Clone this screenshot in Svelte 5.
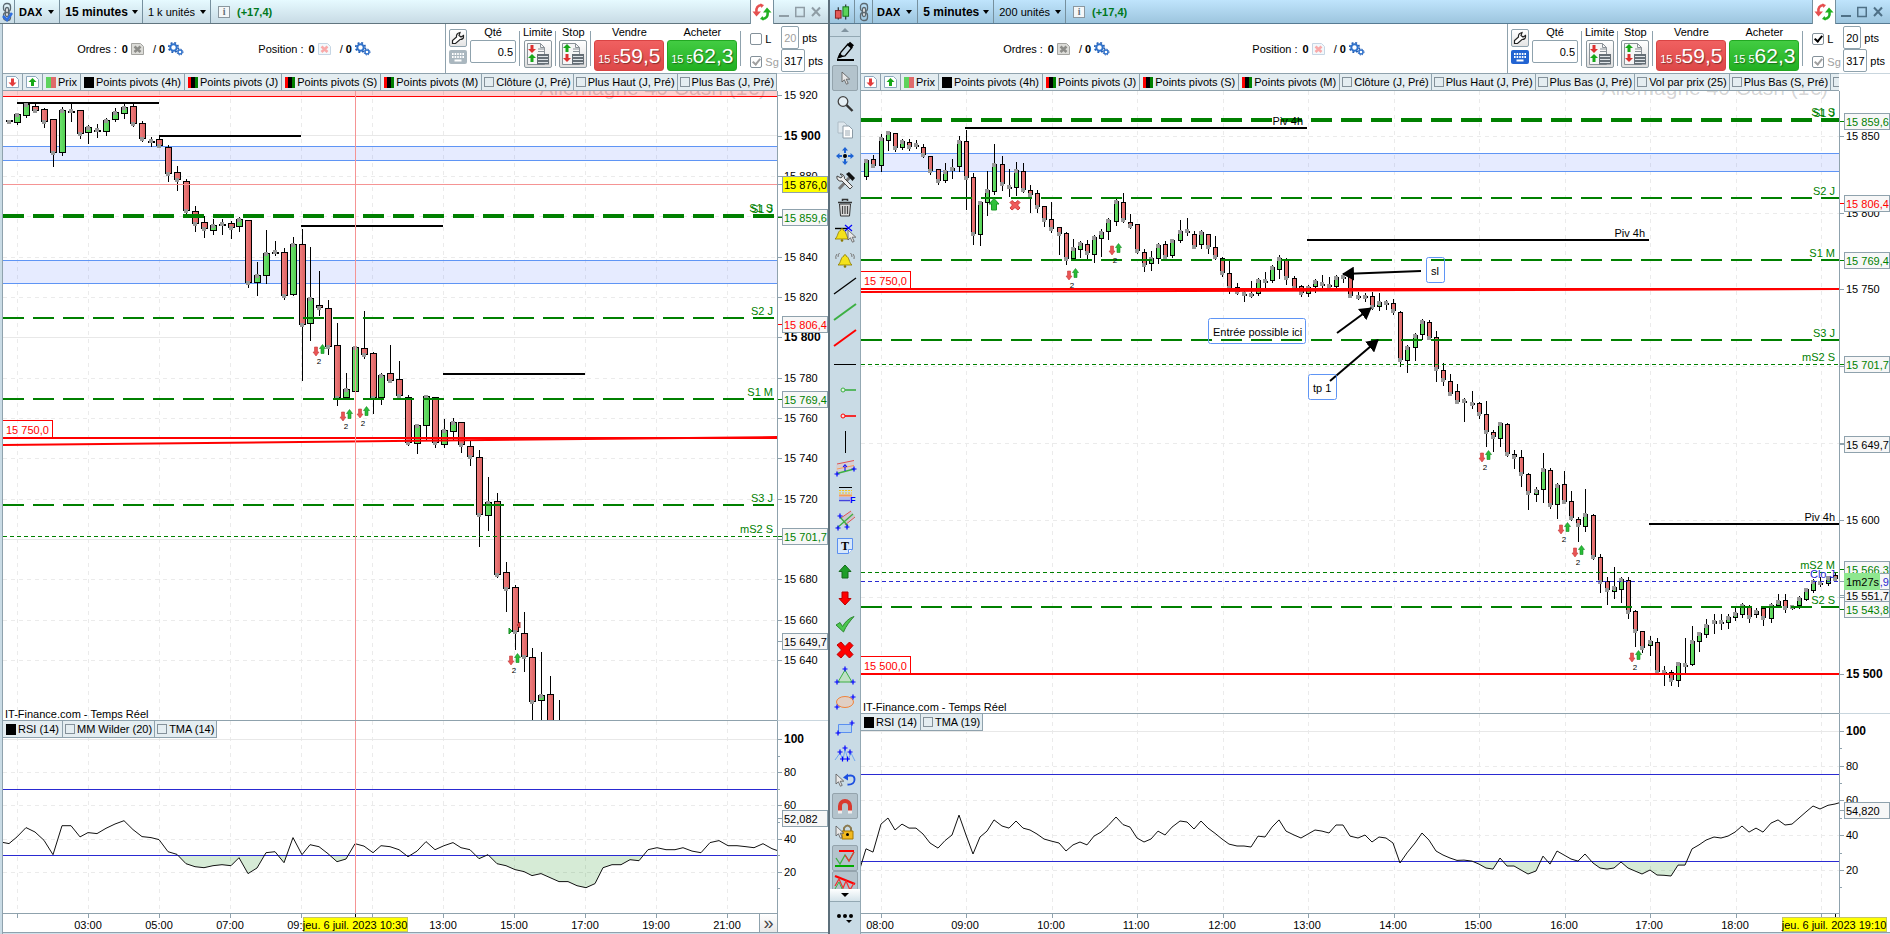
<script lang="ts">
  // [high, body top, body bottom, low, rising]
  type Candle = [number, number, number, number, number]

  interface Legend { label: string; kind: 'price' | 'black' | 'pivot' | 'off' }
  interface Level { y: number; style: 'thick' | 'long' | 'short' | 'close'; label?: string }
  interface Tag { y: number; text: string; kind: string }

  // ── Price data ─────────────────────────────────────────────────────────────
  const candles15: Candle[] = [
    [120,120,122,123,0],[113,114,123,124,1],[103,104,116,117,1],[103,106,111,111,0],[108,109,122,127,0],
    [119,119,153,166,0],[107,110,153,155,1],[103,111,111,121,0],[110,110,134,138,0],[125,127,133,143,1],
    [124,130,130,137,0],[118,120,132,135,1],[108,112,120,121,1],[104,107,114,118,1],[103,106,124,126,0],
    [121,123,139,141,0],[137,141,141,146,0],[136,139,146,147,0],[145,147,174,181,0],[166,172,180,190,0],
    [179,181,211,213,0],[206,211,224,231,0],[216,222,229,237,0],[219,225,231,234,1],[219,224,224,234,0],
    [221,223,228,238,0],[217,219,227,231,1],[220,220,283,287,0],[262,275,283,295,1],[230,253,276,283,1],
    [241,252,252,255,0],[248,252,296,299,0],[237,244,295,295,1],[229,244,325,380,0],[247,298,324,340,1],
    [271,305,308,315,0],[300,308,347,354,0],[323,345,398,405,0],[373,389,398,398,1],[347,347,392,402,1],
    [311,348,355,358,0],[352,353,398,413,0],[373,375,398,404,1],[345,373,381,382,0],[361,379,396,397,0],
    [395,397,443,445,0],[425,425,444,453,1],[395,396,426,440,1],[397,397,443,447,0],[419,430,445,447,1],
    [418,422,432,440,1],[422,422,445,452,0],[440,446,457,465,0],[450,457,515,546,0],[477,502,516,530,1],
    [493,501,575,577,0],[562,572,589,611,0],[585,587,632,649,0],[612,633,657,671,0],[648,657,702,722,0],
    [652,695,701,722,1],[676,694,726,730,0],[700,728,740,740,0],
  ]

  const candles5: Candle[] = [
    [160,160,177,179,1],[155,159,166,167,0],[134,138,166,171,1],[131,132,141,150,1],[133,133,148,151,0],
    [139,141,148,149,1],[139,142,147,150,0],[140,145,145,148,0],[144,147,155,157,0],[156,156,171,174,0],
    [169,169,181,184,0],[163,171,181,182,1],[159,168,171,178,1],[136,141,167,171,1],[130,141,178,209,0],
    [173,177,234,244,0],[201,202,235,245,1],[171,190,203,215,1],[144,164,192,194,1],[156,164,184,190,0],
    [169,187,187,196,0],[162,170,188,195,1],[163,171,190,192,0],[185,190,195,212,0],[190,193,207,212,0],
    [206,206,220,226,0],[202,219,229,232,0],[227,227,234,254,0],[232,233,259,264,0],[239,248,259,260,1],
    [241,243,250,257,1],[240,244,253,258,0],[235,237,255,262,1],[229,232,239,256,1],[218,220,232,239,1],
    [198,201,222,225,1],[193,202,220,222,0],[214,222,226,228,0],[224,224,251,253,0],[249,252,265,271,0],
    [251,258,264,270,1],[243,245,259,263,1],[241,244,257,259,0],[239,240,256,257,1],[220,231,241,242,1],
    [218,231,231,235,0],[231,234,247,248,0],[230,232,245,248,1],[234,234,247,253,0],[236,247,257,259,0],
    [257,258,273,276,0],[261,273,288,293,0],[283,287,292,294,0],[288,294,294,301,0],[281,294,295,297,0],
    [278,280,294,295,1],[272,281,281,290,0],[265,267,281,282,1],[255,258,270,278,1],[258,259,278,284,0],
    [276,278,288,290,0],[285,286,293,296,0],[285,287,294,296,1],[279,281,287,292,1],[275,284,284,287,0],
    [277,285,286,288,0],[275,277,287,289,1],[274,277,277,282,0],[275,276,296,297,0],[292,296,297,299,0],
    [293,296,297,301,0],[292,296,307,309,0],[293,302,307,310,1],[300,303,303,309,0],[299,303,311,314,0],
    [311,312,360,366,0],[345,347,361,372,1],[333,335,348,360,1],[319,321,335,339,1],[320,322,338,339,0],
    [331,337,369,381,0],[363,370,380,385,0],[374,381,394,395,0],[384,391,402,403,0],[398,401,401,421,0],
    [391,403,404,408,0],[402,403,414,418,0],[401,414,432,446,0],[430,432,437,451,0],[422,423,439,446,1],
    [423,424,454,456,0],[450,454,457,468,0],[450,457,474,486,0],[473,474,493,509,0],[487,490,495,501,1],
    [453,469,490,502,1],[468,470,505,508,0],[483,485,505,518,1],[471,484,502,503,0],[491,501,518,520,0],
    [517,519,525,541,0],[489,514,527,531,1],[514,515,557,559,0],[554,557,582,592,0],[577,581,590,604,0],
    [567,587,592,598,1],[577,579,590,602,1],[577,580,612,618,0],[610,611,631,646,0],[631,631,648,652,0],
    [636,641,646,655,1],[638,642,672,673,0],[666,672,672,685,0],[670,672,680,685,0],[662,663,681,686,1],
    [638,665,665,673,0],[626,641,665,665,1],[632,633,642,651,1],[619,625,635,637,1],[614,621,624,633,1],
    [614,622,622,629,0],[614,617,623,628,1],[608,613,618,620,1],[603,605,615,617,1],[605,606,617,622,0],
    [608,611,615,617,1],[607,608,618,625,0],[603,605,619,622,1],[594,601,606,607,1],[594,600,608,612,0],
    [605,607,607,609,0],[596,598,606,608,1],[588,589,600,600,1],[579,581,591,592,1],[577,583,583,586,0],
    [576,577,584,585,1],[573,575,579,580,0],
  ]

  // RSI series start one bar before the first visible candle
  const rsi15 = [
    38,37,41,46.6,44,39,30.3,47.8,47.8,41,43.6,43,46.2,48.8,50.8,45.4,41.2,40.6,39.4,32.1,30.5,24.9,23.1,22.5,
    23.7,24.3,23.7,28.5,18.9,22.3,31.5,32.1,25.5,40.6,30.3,36.3,35.1,30.9,26.1,27.7,36.9,35.5,31.5,35.7,35.1,
    33.3,29.1,32.5,38.2,33.3,35.7,37.6,34.5,33.3,27.9,30.3,24.9,23.7,21.3,20.1,17.7,18.9,16.5,14.1,14.1,11.6,
    10.4,12.9,22.5,24.3,24.3,27.3,26.7,33.3,34.5,33.3,33.3,34.5,32.5,31.5,37.6,38.8,35.7,35.7,35.1,34.5,36.9,
    33.9,32,
  ]
  const rsi5 = [
    19,32.2,30.3,46.4,49.9,43,46.4,44.1,44.1,40.7,35.5,32.6,36.9,40.1,51.6,40.1,29.2,39,42.4,48.8,45.3,44.1,
    48.2,44.1,43,40.7,37.8,36.7,35.5,30.9,34.4,36.1,34.4,39.5,41.8,45.5,50.5,46.1,44.7,38.4,36.1,37.8,42.4,
    40.1,44.7,48.2,47.6,43.6,48.2,44.1,41.1,37.8,34.9,33.8,33.8,33.2,39.5,39,44.7,48.8,42.4,40.1,38.4,40.7,43,
    42.4,41.3,45.9,45.9,39.5,38.4,40.1,36.1,39,38.4,35.5,24,29.8,35.5,41.3,37.2,30.9,28.6,26.9,25.5,25.7,25.1,
    23.4,21.1,20.5,26.9,22.3,22.3,20,17.7,19.4,28,23.4,30.9,28.6,26.3,25.1,29.2,24,21.1,20.5,21.1,24.6,21.1,
    19.4,17.7,20,17.1,16.9,16.5,22.8,22.8,32.1,34.4,37.2,39,38.4,39.5,41.8,45.3,41.8,44.1,41.8,47,48.8,45.9,
    46.4,49.9,53.4,56.8,55.1,57.2,58,59.1,
  ]

  const pivots: Legend[] = [
    { label: 'Prix', kind: 'price' },
    { label: 'Points pivots (4h)', kind: 'black' },
    { label: 'Points pivots (J)', kind: 'pivot' },
    { label: 'Points pivots (S)', kind: 'pivot' },
    { label: 'Points pivots (M)', kind: 'pivot' },
    { label: 'Clôture (J, Pré)', kind: 'off' },
    { label: 'Plus Haut (J, Pré)', kind: 'off' },
    { label: 'Plus Bas (J, Pré)', kind: 'off' },
  ]

  // ── Windows ────────────────────────────────────────────────────────────────
  const windows = [
    {
      id: 'm15', active: false, frame: '15 minutes', units: '1 k unités', trailing: false,
      x0: 3, base: 774, first: 8.5, step: 8.88, body: 6, candles: candles15,
      legend: pivots,
      gridX: Array.from({ length: 11 }, (_, i) => 17.4 + i * 71),
      gridY: [176, 216, 257, 297, 378, 418, 458, 499, 579, 620, 660],
      gridSolid: [135, 337, 539],
      bands: [[146, 160], [260, 283]],
      levels: [
        { y: 216, style: 'thick', label: 'S1 J' },
        { y: 318, style: 'long', label: 'S2 J' },
        { y: 399, style: 'long', label: 'S1 M' },
        { y: 505, style: 'long', label: 'S3 J' },
        { y: 536, style: 'short', label: 'mS2 S' },
      ] as Level[],
      piv4: [[17, 159, 103], [159, 301, 136], [301, 443, 226], [443, 585, 374]],
      piv4Labels: false,
      red: [{ y: 438, text: '15 750,0' }],
      slant: [445, 437],
      marks: [[316, 351], [343, 416], [360, 413], [511, 660]],
      ticks: [
        { y: 95, text: '15 920' }, { y: 136, text: '15 900', bold: true }, { y: 176, text: '15 880' },
        { y: 216, text: '' }, { y: 257, text: '15 840' }, { y: 297, text: '15 820' },
        { y: 337, text: '15 800', bold: true }, { y: 378, text: '15 780' }, { y: 418, text: '15 760' },
        { y: 458, text: '15 740' }, { y: 499, text: '15 720' }, { y: 539, text: '' },
        { y: 579, text: '15 680' }, { y: 620, text: '15 660' }, { y: 660, text: '15 640' },
      ],
      tags: [
        { y: 184, text: '15 876,0', kind: 'cursor' }, { y: 217, text: '15 859,6', kind: 'green' },
        { y: 324, text: '15 806,4', kind: 'red' }, { y: 399, text: '15 769,4', kind: 'green' },
        { y: 536, text: '15 701,7', kind: 'green' }, { y: 641, text: '15 649,7', kind: 'black' },
      ] as Tag[],
      rsi: rsi15, rsiTop: 721, rsi100: 739, rsiUnit: 1.66, high: 70, low: 30,
      rsiLegend: ['MM Wilder (20)', 'TMA (14)'], rsiTag: '52,082', rsiTagY: 818,
      times: [
        [88, '03:00'], [159, '05:00'], [230, '07:00'], [301, '09:00'], [443, '13:00'],
        [514, '15:00'], [585, '17:00'], [656, '19:00'], [727, '21:00'],
      ] as [number, string][],
      cursorX: 355, stamp: 'jeu. 6 juil. 2023 10:30', stampX: 303,
    },
    {
      id: 'm5', active: true, frame: '5 minutes', units: '200 unités', trailing: true,
      x0: 861, base: 978, first: 866.3, step: 7.12, body: 4, candles: candles5,
      legend: [...pivots, { label: 'Vol par prix (25)', kind: 'off' }, { label: 'Plus Bas (S, Pré)', kind: 'off' }, { label: 'Plus Haut (S, Pré)', kind: 'off' }] as Legend[],
      gridX: Array.from({ length: 12 }, (_, i) => 880.5 + i * 85.5),
      gridY: [136, 213, 289, 366, 443, 520, 597],
      gridSolid: [],
      bands: [[153, 171]],
      levels: [
        { y: 120, style: 'thick', label: 'S1 J' },
        { y: 198, style: 'long', label: 'S2 J' },
        { y: 260, style: 'long', label: 'S1 M' },
        { y: 340, style: 'long', label: 'S3 J' },
        { y: 364, style: 'short', label: 'mS2 S' },
        { y: 572, style: 'short', label: 'mS2 M' },
        { y: 581, style: 'close', label: 'Clo J' },
        { y: 607, style: 'long', label: 'S2 S' },
      ] as Level[],
      piv4: [[965, 1307, 128], [1307, 1649, 240], [1649, 1839, 524]],
      piv4Labels: true,
      red: [{ y: 289, text: '15 750,0' }, { y: 674, text: '15 500,0' }],
      slant: [292, 289],
      marks: [[1069, 275], [1112, 250], [1482, 457], [1561, 529], [1575, 552], [1632, 657]],
      ticks: [
        { y: 136, text: '15 850' }, { y: 213, text: '15 800' }, { y: 289, text: '15 750' },
        { y: 366, text: '' }, { y: 443, text: '' }, { y: 520, text: '15 600' }, { y: 597, text: '' },
        { y: 674, text: '15 500', bold: true },
      ],
      tags: [
        { y: 121, text: '15 859,6', kind: 'green' }, { y: 203, text: '15 806,4', kind: 'red' },
        { y: 260, text: '15 769,4', kind: 'green' }, { y: 364, text: '15 701,7', kind: 'green' },
        { y: 444, text: '15 649,7', kind: 'black' }, { y: 569, text: '15 566,3', kind: 'green' },
        { y: 595, text: '15 551,7', kind: 'black' }, { y: 609, text: '15 543,8', kind: 'green' },
        { y: 581, text: '15 560,9', kind: 'blue' },
      ] as Tag[],
      rsi: rsi5, rsiTop: 714, rsi100: 731, rsiUnit: 1.737, high: 75, low: 25,
      rsiLegend: ['TMA (19)'], rsiTag: '54,820', rsiTagY: 810,
      times: [
        [880, '08:00'], [965, '09:00'], [1051, '10:00'], [1136, '11:00'], [1222, '12:00'], [1307, '13:00'],
        [1393, '14:00'], [1478, '15:00'], [1564, '16:00'], [1649, '17:00'], [1735, '18:00'],
      ] as [number, string][],
      cursorX: 1835, stamp: 'jeu. 6 juil. 2023 19:10', stampX: 1782,
    },
  ]
  type Win = (typeof windows)[number]

  // Plot widths as laid out, so that the time scale follows the window
  let widths = $state([774, 978])

  const TOP = 91

  function sx(w: Win, i: number, x: number): number {
    return Math.round(((x - w.x0) * widths[i]) / w.base)
  }

  function rsiY(w: Win, v: number): number {
    return w.rsi100 - w.rsiTop + (100 - v) * w.rsiUnit
  }

  function rsiPoints(w: Win, i: number): string {
    return w.rsi.map((v, n) => `${sx(w, i, w.first + (n - 1) * w.step)},${rsiY(w, v).toFixed(1)}`).join(' ')
  }

  let limits = $state([
    { on: false, dist: '20', stop: '317', qty: '0.5' },
    { on: true, dist: '20', stop: '317', qty: '0.5' },
  ])

  // ── Drawing tools ──────────────────────────────────────────────────────────
  const plus = (x: number, y: number) => `<path d="M${x - 2.5} ${y}h5M${x} ${y - 2.5}v5" stroke="#00f" stroke-width="1.2"/>`
  const pointer = (x: number, y: number) =>
    `<path transform="translate(${x} ${y})" d="M0 0v10l2.400-2.200 2 4.400 1.800-.8-2-4.200h3.600z" fill="#e8e8e8" stroke="#555" stroke-width=".8"/>`
  const bell = (x: number) =>
    `<path transform="translate(${x} 0)" d="M3 17c3-2 2.500-8 6-9 0-2 2-2 2 0 3.500 1 3 7 6 9z" fill="#f4e21c" stroke="#8a7800" stroke-width=".8"/><circle cx="${x + 10}" cy="18.500" r="1.300" fill="#8a7800"/>`

  const tools = [
    { name: 'Crayon', art: '<path d="M6 17l2-5 7-8 4 3.500-7 8.500z" fill="#c9dbe5" stroke="#000" stroke-width="1.300"/><path d="M14 5l3-3.200 4 3.400-3 3.200zM4 19l2.500-6 4 3.500z" fill="#000"/><path d="M4 20h17" stroke="#000" stroke-width="2"/>' },
    { name: 'Pointeur', on: true, art: pointer(9, 6) },
    { name: 'Loupe', art: '<circle cx="10" cy="9.500" r="4.800" fill="#e6f0f6" stroke="#444" stroke-width="1.300"/><path d="M13.500 13l6 6" stroke="#333" stroke-width="2.400"/>' },
    { name: 'Copier', art: '<path d="M5 4h6l3 3v8H5z" fill="#dfe8ee" stroke="#aebcc6"/><path d="M10 8h6l3.500 3.500V20H10z" fill="#fff" stroke="#8b9aa5"/><path d="M12 13h5M12 15h5M12 17h5" stroke="#9aa8b2"/>' },
    { name: 'Déplacer', art: '<path d="M12 3l3 3.500H9zM12 21l3-3.500H9zM3 12l3.500-3v6zM21 12l-3.500-3v6z" fill="#1c62d4"/><path d="M12 6v3M12 15v3M6 12h3M15 12h3" stroke="#1c62d4" stroke-width="2"/><circle cx="12" cy="12" r="2" fill="#000"/>' },
    { name: 'Outils', art: '<path d="M6 19L17 7" stroke="#777" stroke-width="3"/><path d="M13 4l3-2 6 6-2.500 3z" fill="#111"/><path d="M4 6a4 4 0 0 0 5 5l8 8 2.500-2.500-8-8a4 4 0 0 0-4.500-4.500L9.500 6 8 8z" fill="#eee" stroke="#444"/>' },
    { name: 'Supprimer', art: '<path d="M6.500 8h11l-1 12h-9z" fill="#ddd" stroke="#333"/><path d="M5 6.500h14M9.500 5V3.500h5V5" stroke="#333" stroke-width="1.500" fill="none"/><path d="M9.500 10v8M12 10v8M14.500 10v8" stroke="#444" stroke-width="1.200"/>' },
    { name: 'Alerte sur objet', art: '<path d="M2 6.500h13" stroke="#000" stroke-width="1.400"/>' + bell(-1) + '<path d="M12 3l7 6M19 3l-7 6" stroke="#00f" stroke-width="1.200"/>' + pointer(15, 8) },
    { name: 'Alerte', art: bell(2) + '<path d="M4 6q-2 2-1 5M6.500 5q-1.500 1.500-1.500 4M20 6q2 2 1 5M17.500 5q1.500 1.500 1.500 4" stroke="#777" fill="none"/>' },
    { name: 'Ligne', art: '<path d="M1 20L23 4" stroke="#000" stroke-width="1.200"/>' },
    { name: 'Ligne verte', art: '<path d="M1 20L23 4" stroke="#3cb043" stroke-width="2"/>' },
    { name: 'Ligne rouge', art: '<path d="M1 20L23 4" stroke="#f00" stroke-width="2"/>' },
    { name: 'Horizontale', art: '<path d="M1 12.500h22" stroke="#000"/>' },
    { name: 'Segment vert', art: '<path d="M12 12h11" stroke="#3cb043" stroke-width="1.600"/><circle cx="10" cy="12" r="2" fill="#e4f4e4" stroke="#3cb043"/>' },
    { name: 'Segment rouge', art: '<path d="M12 12h11" stroke="#f00" stroke-width="1.600"/><circle cx="10" cy="12" r="2" fill="#fbe2e2" stroke="#f00"/>' },
    { name: 'Verticale', art: '<path d="M12.500 1v22" stroke="#000"/>' },
    { name: 'Canal', art: '<path d="M3 9l18-4v8L3 17z" fill="#d5d0d4"/><path d="M4 8l17-3.500" stroke="#e05050"/><path d="M4 13l17-3.500" stroke="#f59a5a"/><path d="M4 17.500L21 13" stroke="#3cb043" stroke-width="1.500"/><path d="M12 15V9M10 11l2-2.500 2 2.500" stroke="#00f" fill="none"/>' + plus(4, 18) + plus(21, 13) },
    { name: 'Fibonacci', art: '<path d="M6 5.500h13" stroke="#000"/><path d="M6 8.500h13M6 11h13" stroke="#f6c41c" stroke-dasharray="2 1"/><path d="M6 13.500h13" stroke="#f59a5a" stroke-width="2"/><path d="M6 18.500h11" stroke="#44d" stroke-width="1.500"/><path d="M6 16h11" stroke="#99f"/><text x="17" y="21" font-size="9" font-weight="700" fill="#00f">F</text>' },
    { name: 'Fourchette', art: '<path d="M9 10l9-7 4 5-11 9z" fill="#cdc6cc"/><path d="M8 10l10-7M12 17l10-8" stroke="#e05050"/><path d="M4 20L20 6M7 9l8 9" stroke="#3cb043" stroke-width="1.300"/>' + plus(7, 8) + plus(5, 20) + plus(14, 19) },
    { name: 'Texte', art: '<path d="M4.500 4.500h15v11l-4 4h-11z" fill="#d8e8fb" stroke="#5a8ff0"/><path d="M19.500 15.500h-4v4" fill="#fff" stroke="#5a8ff0"/><text x="12" y="16" font-size="12" font-weight="700" text-anchor="middle" font-family="Liberation Serif, serif">T</text>' },
    { name: 'Flèche haut', art: '<path d="M12 5l6 6.500h-3V18H9v-6.500H6z" fill="#1e9e28" stroke="#146b1b"/>' },
    { name: 'Flèche bas', art: '<path d="M12 19l6-6.500h-3V6H9v6.500H6z" fill="#f00" stroke="#b00"/>' },
    { name: 'Valider', art: '<path d="M3 13l4-2.500 2.500 4C12 10 16 6 21 4.500 17 9 13 14 10.500 20z" fill="#4cc84f" stroke="#2f8a32"/>' },
    { name: 'Croix', art: '<path d="M4 7l4-3 4 4.500L16.500 4 20 7.500 16 12l4 4.500-3.500 3.500-4.500-4.500L8 20l-4-3.500L8.500 12z" fill="#f00" stroke="#b00"/>' },
    { name: 'Triangle', art: '<path d="M12 6l7 12H5z" fill="#bfe0c4" stroke="#3cb043"/>' + plus(12, 5) + plus(4, 18) + plus(20, 18) },
    { name: 'Ellipse', art: '<ellipse cx="12" cy="12" rx="8.500" ry="5.500" fill="#e0cfc4" stroke="#f0843c"/>' + plus(4, 17) + plus(20, 7) },
    { name: 'Rectangle', art: '<path d="M5.500 8.500h13v8h-13z" fill="#b8d4f0" stroke="#5a8ff0"/>' + plus(5, 17) + plus(19, 7) },
    { name: 'Vagues', art: '<path d="M2 18l5-7 3 7 2-11 3 11 3-7 4 8" fill="none" stroke="#6fa6f0"/>' + plus(7, 10) + plus(12, 6) + plus(17, 10) + plus(9.500, 17) + plus(14.500, 17) },
    { name: 'Annuler', art: pointer(3, 6) + '<path d="M14 8q8-2 7.500 4-.5 5-7 4.500" fill="none" stroke="#1c4fe0" stroke-width="1.800"/><path d="M10 9.500l5-4v7z" fill="#1c4fe0"/>' },
    { name: 'Aimant', on: true, art: '<path d="M7 19v-7a5 5 0 0 1 10 0v7" fill="none" stroke="#d8392f" stroke-width="4"/><path d="M5 16.500h4v3H5zM15 16.500h4v3h-4z" fill="#eee"/>' },
    { name: 'Verrou', art: '<path d="M11 11V8q3.500-5 7 0v3" fill="none" stroke="#8a7a50" stroke-width="2"/><path d="M9 11h11v8H9z" fill="#f2b91f" stroke="#a87800"/><circle cx="14.500" cy="14.500" r="1.500"/>' + pointer(3, 6) },
    { name: 'Supports', on: true, art: '<path d="M3 12l4 6 5-9 4 6 5-9" fill="none" stroke="#3cb043" stroke-width="1.300"/><path d="M6 5h15" stroke="#f00" stroke-width="2"/><path d="M2 20h19" stroke="#0a0" stroke-width="2"/><path d="M12 9l4 6 5-9" fill="none" stroke="#e33" stroke-width="1.200"/>' },
    { name: 'Tendances', on: true, art: '<path d="M2 4l20 8" stroke="#f00" stroke-width="2.400"/><path d="M2 14l4-7 4 9 3-7 4 9 4-7" fill="none" stroke="#e33" stroke-width="1.300"/><path d="M2 17l4-7 4 9" fill="none" stroke="#3cb043"/>' },
  ]
</script>

{#snippet chain(checked: boolean)}
  <svg class="chain" width="12" height="20" viewBox="0 0 12 20">
    <g fill="none" stroke="#5b6870" stroke-width="1.3">
      <rect x="2.500" y="1.500" width="7" height="8" rx="3" />
      <rect x="4.500" y="5.500" width="3" height="9" rx="1.500" fill="#eee" />
      <rect x="2.500" y="10.500" width="7" height="8" rx="3" />
    </g>
    {#if checked}<path d="M2 14l4 4 5-7" fill="none" stroke="#2f6fe0" stroke-width="2.500" />{/if}
  </svg>
{/snippet}

{#snippet cogs()}
  <svg width="16" height="14" viewBox="0 0 16 14" fill="none">
    <circle cx="5.500" cy="5.500" r="3.200" stroke="#2f72cc" stroke-width="2" />
    <circle cx="5.500" cy="5.500" r="4.800" stroke="#1f5cb5" stroke-width="1.600" stroke-dasharray="1.900 1.900" />
    <circle cx="12" cy="10" r="2" stroke="#2f72cc" stroke-width="1.400" />
    <circle cx="12" cy="10" r="3" stroke="#1f5cb5" stroke-dasharray="1.200 1.200" />
  </svg>
{/snippet}

{#snippet cancel(red: boolean)}
  <svg width="13" height="12" viewBox="0 0 13 12">
    <path d="M.5.5h9l3 3v8h-12z" fill={red ? '#f3f8fb' : '#dcdcd8'} stroke={red ? '#c6d6e4' : '#a4a4a0'} />
    <path d="M3.500 3.500l6 5.500M9.500 3.500L3.500 9" stroke={red ? '#f9a9a9' : '#8c8c88'} stroke-width="2.600" />
  </svg>
{/snippet}

{#snippet counter(name: string, red: boolean)}
  <div class="counter">
    <span>{name} :</span>
    <b>0</b>
    <button class="bare" aria-label="Annuler {name}">{@render cancel(red)}</button>
    <span class="slash">/</span>
    <b>0</b>
    <button class="bare" aria-label="Automatiques {name}">{@render cogs()}</button>
  </div>
{/snippet}

{#snippet orderIcon(flip: boolean)}
  <svg width="24" height="24" viewBox="0 0 24 24">
    <path d="M1.500 1.500h13l4 4v17h-17z" fill="#f6f6f6" stroke="#8b9298" />
    <path d="M14.500 1.500v4h4M12 7h6M12 9.500h6" fill="none" stroke="#8b9298" />
    <path d="M11 12h12v10.500H11z" fill="#666f76" />
    <path d="M12 14.500h10M12 17.500h10M12 20.500h10" stroke="#dfe4e8" />
    <path d="M6 11l4-4H7.500V3h-3v4H2z" transform={flip ? 'translate(0 9)' : ''} fill="#dd2f2f" />
    <path d="M6 12l4 4H7.500v4h-3v-4H2z" transform={flip ? 'translate(0 -10)' : ''} fill="#18a818" />
  </svg>
{/snippet}

{#snippet swatch(kind: string)}
  <svg class="swatch" width="10" height="11" viewBox="0 0 10 11" shape-rendering="crispEdges">
    {#if kind === 'price'}
      <path d="M0 0h5v11H0z" fill="#5dd35d" /><path d="M5 0h5v11H5z" fill="#df6a6a" />
    {:else if kind === 'pivot'}
      <path d="M0 0h10v11H0z" /><path d="M0 0h3v11H0z" fill="#f00" /><path d="M7 0h3v11H7z" fill="#008000" />
    {:else}
      <path d="M0 0h10v11H0z" />
    {/if}
  </svg>
{/snippet}

{#snippet legendItem(item: Legend)}
  {#if item.kind === 'off'}
    <label class="item"><input type="checkbox" />{item.label}</label>
  {:else}
    <button class="item">{@render swatch(item.kind)}{item.label}</button>
  {/if}
{/snippet}

{#snippet pageArrow(up: boolean)}
  <svg width="13" height="12" viewBox="0 0 13 12">
    <path d="M.5.5h9l3 3v8h-12z" fill="#fff" stroke="#8ea8bd" />
    {#if up}
      <path d="M6.500 2l4 4h-2.500v4h-3v-4H2.500z" fill="#17a817" />
    {:else}
      <path d="M6.500 10.500l4-4H8v-4H5v4H2.500z" fill="#e23b3b" />
    {/if}
  </svg>
{/snippet}

{#snippet tag(t: Tag, top: number)}
  <path d="M0 {t.y - top + 0.5}h4" class="tick {t.kind}" />
  <rect x="4.5" y={t.y - top - 7.5} width="45" height="16" class="tagbox {t.kind}" />
  <text x="6" y={t.y - top + 5} class={t.kind}>{t.text}</text>
{/snippet}

<div class="desk">
  {#each windows as w, i}
    <section class="window" class:active={w.active}>
      <header class="titlebar">
        {#if w.active}
          <button class="seg" aria-label="Style du graphique">
            <svg width="16" height="18" viewBox="0 0 17 18">
              <path d="M4.500 4v13M12.500 1v16" stroke="#000" />
              <rect x="1.500" y="7.500" width="6" height="8" fill="#e35a5a" stroke="#8a1d1d" />
              <rect x="9.500" y="3.500" width="6" height="10" fill="#5ad35a" stroke="#167016" />
            </svg>
          </button>
        {/if}
        <button class="seg link" aria-label="Lier les fenêtres">{@render chain(!w.active)}</button>
        <label class="seg pick dax"><select aria-label="Valeur"><option>DAX</option></select><i></i></label>
        <label class="seg pick frame"><select aria-label="Unité de temps"><option>{w.frame}</option></select><i></i></label>
        <label class="seg pick"><select aria-label="Historique"><option>{w.units}</option></select><i></i></label>
        <div class="change">
          <button class="info" aria-label="Informations">i</button>
          <b>(+17,4)</b>
        </div>
        <button class="refresh" aria-label="Actualiser">
          <svg width="20" height="18" viewBox="0 0 20 18">
            <path d="M10 2Q3.500 2.500 4.500 9" fill="none" stroke="#e65050" stroke-width="2.600" />
            <path d="M.5 8.500h8.500l-4.500 5zM8 .5l4 1.500-2.500 3z" fill="#e65050" />
            <path d="M10 16q6.500-.5 5.500-7" fill="none" stroke="#22b022" stroke-width="2.600" />
            <path d="M11 9.500h8.500l-4.500-5zM12 17.500l-4-1.500 2.500-3z" fill="#22b022" />
          </svg>
        </button>
        <div class="controls">
          <button aria-label="Réduire"><svg width="10" height="12" viewBox="0 0 10 12"><path d="M0 10h10" /></svg></button>
          <button aria-label="Agrandir"><svg width="10" height="12" viewBox="0 0 10 12"><path d="M.75 1.500h8.500v9H.75z" class="thin" /></svg></button>
          <button aria-label="Fermer"><svg width="10" height="12" viewBox="0 0 10 12"><path d="M1 1.500l8 8.500M9 1.500L1 10" /></svg></button>
        </div>
      </header>

      <div class="body">
        {#if w.active}
          <nav class="toolbar">
            <button class="scroll" aria-label="Monter"><svg width="8" height="4"><path d="M0 4l4-4 4 4z" fill="#8194a0" /></svg></button>
            <div class="tools">
              {#each tools as tool}
                <button class="tool" class:on={tool.on} aria-label={tool.name}>
                  <svg width="24" height="24" viewBox="0 0 24 24">{@html tool.art}</svg>
                </button>
              {/each}
            </div>
            <button class="more" aria-label="Descendre"><svg width="8" height="4"><path d="M0 0h8L4 4z" /></svg></button>
            <button class="dots" aria-label="Autres outils">
              <svg width="20" height="12"><circle cx="4" cy="4" r="2" /><circle cx="10" cy="4" r="2" /><circle cx="16" cy="4" r="2" /><path d="M11 8h6l-3 3z" /></svg>
            </button>
          </nav>
        {:else}
          <div class="edge"></div>
        {/if}

        <div class="content">
          <div class="orders">
            <div class="counters">
              {@render counter('Ordres', false)}
              {@render counter('Position', true)}
            </div>
            <div class="trade">
              <div class="stack">
                <button class="key" aria-label="Réglages">
                  <svg width="14" height="14" viewBox="0 0 14 14"><path d="M1.500 12.500v-3l4-3.500q-.5-3.500 3.500-4.500l-1 3 2 1.500 2.500-1.500q.5 4-3.500 4L4.500 12.500z" fill="#fff" stroke="#222" stroke-width="1.200" /></svg>
                </button>
                <button class="keyboard" aria-label="Clavier">
                  <svg width="14" height="10" viewBox="0 0 14 10"><path d="M1 2h12M1 5h12" stroke="#fff" stroke-width="2" stroke-dasharray="1.600 1" /><path d="M3.500 8.500h7" stroke="#fff" stroke-width="2" /></svg>
                </button>
              </div>
              <div class="field">
                <label for="qty-{w.id}">Qté</label>
                <input id="qty-{w.id}" class="qty" bind:value={limits[i].qty} />
              </div>
              <div class="sep"></div>
              <div class="field"><span>Limite</span><button class="order" aria-label="Limite">{@render orderIcon(false)}</button></div>
              <div class="sep"></div>
              <div class="field"><span>Stop</span><button class="order" aria-label="Stop">{@render orderIcon(true)}</button></div>
              <div class="sep"></div>
              <div class="field"><span>Vendre</span><button class="deal sell"><small>15 5</small>59,5</button></div>
              <div class="field"><span>Acheter</span><button class="deal buy"><small>15 5</small>62,3</button></div>
              <div class="sep"></div>
              <div class="checks">
                <label class="check"><input type="checkbox" bind:checked={limits[i].on} />L</label>
                <label class="check dim"><input type="checkbox" checked disabled />Sg</label>
              </div>
              <div class="points">
                <label><input class="short" class:dim={!limits[i].on} bind:value={limits[i].dist} />pts</label>
                <label><input bind:value={limits[i].stop} />pts</label>
              </div>
            </div>
          </div>

          <div class="grid">
            <div class="legend">
              <button class="item arrow" aria-label="Ordre de vente">{@render pageArrow(false)}</button>
              <button class="item arrow" aria-label="Ordre d'achat">{@render pageArrow(true)}</button>
              {#each w.legend as item}{@render legendItem(item)}{/each}
            </div>
            <div class="corner"></div>

            <!-- Price plot -->
            <div class="plot" bind:clientWidth={widths[i]}>
              <svg class="chart">
                <defs>
                  <linearGradient id="up-{w.id}"><stop stop-color="#6fe36f" /><stop offset="1" stop-color="#4fce4f" /></linearGradient>
                  <linearGradient id="down-{w.id}"><stop stop-color="#f07f7f" /><stop offset="1" stop-color="#da6060" /></linearGradient>
                  <marker id="head-{w.id}" markerUnits="userSpaceOnUse" markerWidth="12" markerHeight="14" refX="11" refY="7" orient="auto"><path d="M0 0l12 7-12 7z" /></marker>
                </defs>
                <g transform="translate(0 {-TOP})">
                  <g class="crisp">
                    {#each w.gridX as x}<path class="grid-line" d="M{sx(w, i, x) + 0.5} {TOP}V730" />{/each}
                    {#each w.gridY as y}<path class="grid-line" d="M0 {y + 0.5}H{widths[i]}" />{/each}
                    {#each w.gridSolid as y}<path class="grid-solid" d="M0 {y + 0.5}H{widths[i]}" />{/each}
                  </g>
                  <text class="watermark" x={widths[i] - 11} y="95">Allemagne 40 Cash (1€)</text>
                  <g class="crisp">
                    {#if !w.active}
                      <rect x="0" y={TOP} width={widths[i]} height="5" fill="#f00" fill-opacity=".18" />
                      <path d="M0 96.5H{widths[i]}" stroke="#f00" />
                    {/if}
                    {#each w.bands as [a, b]}
                      <rect x="0" y={a} width={widths[i]} height={b - a} fill="#6482ff" fill-opacity=".16" />
                      <path d="M0 {a + 0.5}H{widths[i]}M0 {b + 0.5}H{widths[i]}" stroke="#5f95f5" />
                    {/each}
                    {#each w.piv4 as [a, b, y]}
                      <path d="M{sx(w, i, a)} {y}H{sx(w, i, b)}" stroke="#000" stroke-width="2" />
                    {/each}
                    {#each w.candles as [high, top, bottom, low, up], n}
                      {@const x = sx(w, i, w.first + n * w.step)}
                      <path d="M{x + 0.5} {high}V{low + 1}" stroke="#000" />
                      <rect
                        x={x - w.body / 2 + 0.5} y={top + 0.5} width={w.body} height={Math.max(bottom - top - 1, 1)}
                        fill="url(#{up ? 'up' : 'down'}-{w.id})" stroke="#000"
                      />
                      <rect x={x - 2} y={up ? top - 1 : bottom - 2} width="4" height="4" fill="#989898" />
                    {/each}
                    {#each w.levels as l}
                      <path class="level {l.style}" d="M0 {l.style === 'short' || l.style === 'close' ? l.y + 0.5 : l.y}H{widths[i]}" />
                    {/each}
                  </g>

                  {#each w.red as r}
                    <path class="crisp" d="M0 {r.y}H{widths[i]}" stroke="#f00" stroke-width="2" />
                    <path class="crisp" d="M0 {r.y - 17.5}H49.5V{r.y}" fill="none" stroke="#f00" />
                    <text class="red" x="3" y={r.y - 4}>{r.text}</text>
                  {/each}
                  <path d="M0 {w.slant[0]}L{widths[i]} {w.slant[1]}" stroke="#f00" stroke-width="2" />

                  {#each w.levels as l}
                    <text class="end {l.style}" x={widths[i] - 4} y={l.y - 3}>{l.label}</text>
                  {/each}
                  <text class="end" x={widths[i] - 4} y={w.levels[0].y - 4}>S1 S</text>
                  {#if w.piv4Labels}
                    {#each w.piv4 as [, b, y]}<text class="end piv" x={sx(w, i, b) - 4} y={y - 3}>Piv 4h</text>{/each}
                  {/if}

                  {#each w.marks as [x, y]}
                    <g transform="translate({sx(w, i, x)} {y})">
                      <path d="M0 5l-3-4h1.500v-5h3v5H3z" fill="#ea5454" stroke="#c73c3c" stroke-width=".6" />
                      <path d="M6.500-6.500l3 4H8v5H5v-5H3.500z" fill="#28bd38" stroke="#148a20" stroke-width=".6" />
                      <text class="count" x="3" y="13">2</text>
                    </g>
                  {/each}

                  {#if w.active}
                    <path transform="translate({sx(w, i, 994)} 204)" d="M0-5.500l5 5.500H2.500v6h-5v-6H-5z" fill="#2fc03a" stroke="#1a9a25" />
                    <path transform="translate({sx(w, i, 1015)} 205)" d="M-3-4.500l3 2.500 3-2.500 2 2-2.500 2.500L5 3 3 5 0 2.500-3 5-5 3-2.500 0-5-2.500z" fill="#f05a5a" stroke="#cf3a3a" />
                    <g stroke="#000" stroke-width="2">
                      <path d="M{sx(w, i, 1421)} 271L{sx(w, i, 1343)} 274" marker-end="url(#head-{w.id})" />
                      <path d="M{sx(w, i, 1337)} 333L{sx(w, i, 1371)} 308" marker-end="url(#head-{w.id})" />
                      <path d="M{sx(w, i, 1330)} 381L{sx(w, i, 1378)} 340" marker-end="url(#head-{w.id})" />
                    </g>
                    <g class="notes">
                      <rect x={sx(w, i, 1426) + 0.5} y="257.5" width="18" height="25" rx="2" />
                      <rect x={sx(w, i, 1208) + 0.5} y="318.5" width="97" height="25" rx="2" />
                      <rect x={sx(w, i, 1308) + 0.5} y="374.5" width="28" height="25" rx="2" />
                    </g>
                    <text x={sx(w, i, 1431)} y="275">sl</text>
                    <text x={sx(w, i, 1213)} y="336">Entrée possible ici</text>
                    <text x={sx(w, i, 1313)} y="392">tp 1</text>
                  {:else}
                    <path transform="translate({sx(w, i, 509)} 628)" d="M0 0v6l3-3z" fill="#28bd38" stroke="#148a20" />
                    <path transform="translate({sx(w, i, 520)} 622)" d="M0 0v6l-3-3z" fill="#e23b3b" stroke="#a33" />
                    <g class="crisp cross">
                      <path d="M0 184.500H{widths[i]}" />
                      <path d="M{sx(w, i, w.cursorX) + 0.5} {TOP}V730" />
                    </g>
                  {/if}
                </g>
              </svg>
              <span class="source">IT-Finance.com - Temps Réel</span>
            </div>
            <svg class="axis">
              {#each w.ticks as t}
                <path class="tick" d="M0 {t.y - TOP + 0.5}h4" />
                <text x="6" y={t.y - TOP + 4} class:bold={t.bold}>{t.text}</text>
              {/each}
              {#each w.tags as t}{@render tag(t, TOP)}{/each}
              {#if w.active}
                <rect x="4" y={573 - TOP} width="36" height="17" fill="#8fe78f" />
                <text x="6" y={586 - TOP}>1m27s</text>
              {/if}
            </svg>

            <!-- RSI plot -->
            <div class="plot rsi" class:tall={w.active}>
              <svg class="chart">
                <clipPath id="under-{w.id}"><rect x="0" y={rsiY(w, w.low)} width={widths[i]} height="100" /></clipPath>
                <g class="crisp">
                  {#each w.gridX as x}<path class="grid-line" d="M{sx(w, i, x) + 0.5} 0V200" />{/each}
                  {#each [80, 60, 40, 20] as v}<path class="grid-line" d="M0 {Math.round(rsiY(w, v)) + 0.5}H{widths[i]}" />{/each}
                  <path class="grid-solid" d="M0 {rsiY(w, 100) + 0.5}H{widths[i]}" />
                </g>
                <polygon
                  points="0,{rsiY(w, w.low)} {rsiPoints(w, i)} {widths[i]},{rsiY(w, w.low)}"
                  clip-path="url(#under-{w.id})" fill="#008000" fill-opacity=".16"
                />
                <path class="crisp" d="M0 {Math.round(rsiY(w, w.high)) + 0.5}H{widths[i]}M0 {Math.round(rsiY(w, w.low)) + 0.5}H{widths[i]}" stroke="#2a2ad2" />
                <polyline points={rsiPoints(w, i)} fill="none" stroke="#111" />
                {#if !w.active}<path class="crisp cross" d="M{sx(w, i, w.cursorX) + 0.5} 0V200" />{/if}
              </svg>
              <div class="rsi-legend">
                <button class="item">{@render swatch('black')}RSI (14)</button>
                {#each w.rsiLegend as label}<label class="item"><input type="checkbox" />{label}</label>{/each}
              </div>
            </div>
            <svg class="axis rsi-axis">
              {#each [100, 80, 60, 40, 20] as v}
                <path class="tick" d="M0 {Math.round(rsiY(w, v)) + 0.5}h4M0 {Math.round(rsiY(w, v - 10)) + 0.5}h2" />
                <text x="6" y={Math.round(rsiY(w, v)) + 4} class:bold={v === 100}>{v}</text>
              {/each}
              {@render tag({ y: w.rsiTagY, text: w.rsiTag, kind: 'black' }, w.rsiTop)}
            </svg>
          </div>

          <!-- Time scale -->
          <div class="time">
            <svg class="scale">
              {#each w.gridX as x}<path class="tick" d="M{sx(w, i, x) + 0.5} 0v4" />{/each}
              {#each w.times as [x, text]}<text class="hour" x={sx(w, i, x)} y="15">{text}</text>{/each}
              <path d="M{sx(w, i, w.cursorX) + 0.5} 0v4" stroke="#000" />
              <rect x={sx(w, i, w.stampX) + 0.5} y="3.5" width="104" height="14" fill="#ff0" stroke="#c4c46a" />
              <text class="hour stamp" x={sx(w, i, w.stampX) + 52} y="15">{w.stamp}</text>
            </svg>
            {#if !w.trailing}<button class="latest" aria-label="Dernière barre">»</button>{/if}
            <div class="rest"></div>
          </div>
          <div class="foot"></div>
        </div>
      </div>
    </section>
  {/each}
</div>

<style>
  :global(body) {
    margin: 0;
    overflow: hidden;
  }

  .desk {
    display: grid;
    grid-template-columns: 830fr 1060fr;
    height: 100vh;
    background: #fff;
    font-family: 'Liberation Sans', Arial, sans-serif;
    font-size: 11px;
    color: #000;
  }

  .desk :global(*) {
    box-sizing: border-box;
  }

  button,
  input,
  select {
    margin: 0;
    padding: 0;
    border: none;
    background: none;
    font: inherit;
    color: inherit;
  }

  svg {
    display: block;
    flex-shrink: 0;
  }

  .window {
    display: flex;
    flex-direction: column;
    min-width: 0;
    height: 100vh;
    border-right: 2px solid #5c6f7b;
  }

  .window.active {
    border-right: none;
  }

  /* Title bar */
  .titlebar {
    display: flex;
    height: 24px;
    flex-shrink: 0;
    border-bottom: 1px solid #61757f;
    background: linear-gradient(#e6faff, #c8dbe5);
  }

  .active .titlebar {
    border-bottom-color: #577b93;
    background: linear-gradient(#bfe4fc, #9dc5de);
  }

  .seg {
    display: flex;
    align-items: center;
    justify-content: center;
    gap: 5px;
    padding: 0 4px;
    border-right: 1px solid #76909e;
  }

  .link {
    width: 15px;
    padding: 0;
  }

  .active .link {
    width: 18px;
  }

  .pick {
    padding: 0 4px 0 5px;
  }

  .pick select {
    appearance: none;
    field-sizing: content;
    outline: none;
  }

  .pick i {
    border: 3px solid transparent;
    border-top: 4px solid #000;
    border-bottom: none;
  }

  .dax {
    gap: 6px;
    padding: 0 5px 0 4px;
    font-weight: 700;
  }

  .frame {
    gap: 4px;
    font-size: 12px;
    font-weight: 700;
  }

  .change {
    display: flex;
    flex: 1;
    align-items: center;
    gap: 7px;
    padding-left: 7px;
    color: #00781c;
  }

  .info {
    width: 12px;
    height: 12px;
    border: 1px solid #8a979f;
    background: #f4f7f8;
    color: #65727a;
    font: 700 10px/10px 'Liberation Serif', serif;
    text-align: center;
  }

  .refresh {
    display: flex;
    align-items: center;
    justify-content: center;
    width: 24px;
    height: 24px;
    border: solid #76909e;
    border-width: 0 1px;
    background: #fff;
  }

  .controls {
    display: flex;
    align-items: center;
    gap: 6px;
    padding: 0 7px 0 5px;
  }

  .controls path {
    fill: none;
    stroke: #8f9da5;
    stroke-width: 2;
  }

  .active .controls path {
    stroke: #4f7086;
  }

  .controls path.thin {
    stroke-width: 1.500px;
  }

  .body {
    display: flex;
    flex: 1;
    min-height: 0;
  }

  .edge {
    width: 3px;
    border-right: 1px solid #8fa2ad;
    background: #c9dbe5;
  }

  /* Drawing toolbar */
  .toolbar {
    display: flex;
    flex-direction: column;
    width: 31px;
    flex-shrink: 0;
    border-right: 1px solid #93a8b3;
    background: #c9dbe5;
  }

  .scroll {
    display: flex;
    align-items: center;
    justify-content: center;
    height: 13px;
    border-bottom: 1px solid #93a8b3;
  }

  .tools {
    flex: 1;
    min-height: 0;
    overflow: hidden;
    padding: 2px 2px 0;
  }

  .tool {
    display: flex;
    align-items: center;
    justify-content: center;
    width: 26px;
    height: 26px;
    border: 1px solid transparent;
    border-radius: 2px;
  }

  .tool.on {
    border-color: #94a4ad;
    background: #b3c3cc;
  }

  .more {
    display: flex;
    align-items: center;
    justify-content: center;
    height: 13px;
    border-bottom: 1px solid #93a8b3;
    background: linear-gradient(#fff, #d5e3ea);
  }

  .dots {
    display: flex;
    align-items: center;
    justify-content: center;
    height: 32px;
  }

  .content {
    display: flex;
    flex-direction: column;
    flex: 1;
    min-width: 0;
  }

  /* Order panel */
  .orders {
    display: flex;
    height: 49px;
    flex-shrink: 0;
  }

  .counters {
    display: flex;
    flex: 1;
    align-items: center;
    justify-content: space-evenly;
  }

  .counter {
    display: flex;
    align-items: center;
    gap: 3px;
  }

  .counter b:first-of-type {
    margin-left: 2px;
  }

  .slash {
    margin-left: 6px;
  }

  .trade {
    display: flex;
    width: 383px;
    flex-shrink: 0;
    padding: 2px 2px 0 3px;
    gap: 3px;
    border-left: 1px solid #8fa2ad;
  }

  .stack {
    display: flex;
    flex-direction: column;
    gap: 3px;
    padding-top: 3px;
  }

  .key {
    display: flex;
    align-items: center;
    justify-content: center;
    width: 18px;
    height: 18px;
    border: 1px solid #8fa2ad;
    border-radius: 2px;
    background: linear-gradient(#fff, #e4e4e4);
  }

  .keyboard {
    display: flex;
    align-items: center;
    justify-content: center;
    width: 18px;
    height: 14px;
    border-radius: 2px;
    background: #aab7bf;
  }

  .active .keyboard {
    background: #2364d2;
  }

  .field {
    display: flex;
    flex-direction: column;
    align-items: center;
    gap: 1px;
    line-height: 13px;
  }

  .qty {
    width: 46px;
    height: 23px;
    padding-right: 2px;
    border: 1px solid #8fa2ad;
    border-radius: 2px;
    text-align: right;
  }

  .sep {
    width: 1px;
    height: 35px;
    margin-top: 5px;
    background: #8fa2ad;
  }

  .order {
    display: flex;
    align-items: center;
    justify-content: center;
    width: 28px;
    height: 28px;
    border: 1px solid #8b989f;
    border-radius: 2px;
    background: linear-gradient(#fff, #dedede);
  }

  .deal {
    width: 70px;
    height: 31px;
    border-radius: 3px;
    color: #fff;
    font-size: 21px;
    line-height: 29px;
    text-shadow: 1px 1px 1px rgba(0, 0, 0, 0.4);
  }

  .deal small {
    font-size: 11px;
  }

  .sell {
    border: 1px solid #d94444;
    background: linear-gradient(#f06060, #dd4848);
  }

  .buy {
    border: 1px solid #22a822;
    background: linear-gradient(#42cc42, #22b022);
  }

  .checks {
    display: flex;
    flex-direction: column;
    gap: 10px;
    width: 34px;
    padding: 6px 0 0 6px;
  }

  .check {
    display: flex;
    align-items: center;
    gap: 3px;
    height: 13px;
  }

  .dim {
    color: #a0a0a0;
  }

  input[type='checkbox'] {
    appearance: none;
    position: relative;
    width: 10px;
    height: 10px;
    flex-shrink: 0;
    border: 1px solid #84919a;
  }

  .check input[type='checkbox'] {
    width: 12px;
    height: 12px;
    border-radius: 2px;
  }

  input[type='checkbox']:checked::after {
    content: '';
    position: absolute;
    left: 3px;
    top: 0;
    width: 3px;
    height: 6px;
    border: solid currentColor;
    border-width: 0 2px 2px 0;
    rotate: 40deg;
  }

  .points label {
    display: flex;
    align-items: center;
    gap: 3px;
  }

  .points input {
    width: 24px;
    height: 23px;
    border: 1px solid #8fa2ad;
    border-radius: 2px;
    text-align: center;
  }

  .points .short {
    width: 18px;
  }

  /* Plots */
  .grid {
    display: grid;
    grid-template-columns: minmax(0, 1fr) 51px;
    grid-template-rows: 18px minmax(0, 1fr) auto;
    flex: 1;
    min-height: 0;
  }

  .legend {
    display: flex;
    overflow: hidden;
    border: solid #8fa2ad;
    border-width: 1px 0;
    background: #e4edf1;
  }

  .corner {
    border-top: 1px solid #c9d6de;
  }

  .item {
    display: flex;
    align-items: center;
    gap: 2px;
    padding: 0 3px;
    border-right: 1px solid #8fa2ad;
    white-space: nowrap;
    flex-shrink: 0;
    line-height: 16px;
  }

  label.item {
    padding: 0 2px;
  }

  .plot {
    position: relative;
    min-width: 0;
    overflow: hidden;
    border-bottom: 1px solid #8fa2ad;
  }

  .chart {
    width: 100%;
    height: 100%;
  }

  .source {
    position: absolute;
    left: 2px;
    bottom: 0;
    line-height: 12px;
  }

  .rsi {
    height: 193px;
  }

  .rsi.tall {
    height: 200px;
  }

  .rsi-legend {
    position: absolute;
    left: 0;
    top: 0;
    display: flex;
    border-bottom: 1px solid #8fa2ad;
    background: #e4edf1;
  }

  .axis {
    width: 51px;
    height: 100%;
    border-left: 1px solid #8fa2ad;
    border-bottom: 1px solid #c9d6de;
  }

  .rsi-axis {
    border-bottom: none;
  }

  .crisp,
  .tick,
  .tagbox {
    shape-rendering: crispEdges;
  }

  .grid-line {
    stroke: #ebebeb;
    stroke-dasharray: 4 4;
  }

  .grid-solid {
    stroke: #e8e8e8;
  }

  .watermark {
    font-size: 21px;
    fill: #000;
    fill-opacity: 0.18;
    text-anchor: end;
  }

  .level {
    stroke: #008000;
    stroke-width: 2;
    stroke-dasharray: 21 9;
  }

  .level.thick {
    stroke-width: 4;
  }

  .level.short,
  .level.close {
    stroke-width: 1;
    stroke-dasharray: 4 3;
  }

  .level.close {
    stroke: #2a2ad2;
  }

  .end {
    fill: #008000;
    text-anchor: end;
  }

  .end.close {
    fill: #2a2ad2;
  }

  .end.piv {
    fill: #000;
  }

  .count {
    font-size: 8px;
    text-anchor: middle;
  }

  .notes {
    fill: none;
    stroke: #5f95f5;
  }

  .cross {
    stroke: #f59494;
  }

  .tick {
    fill: none;
    stroke: #8fa2ad;
  }

  .tick.green {
    stroke: #008000;
  }

  .tick.red {
    stroke: #f00;
  }

  .tagbox {
    fill: #f7f7f7;
    stroke: #8fa2ad;
  }

  .tagbox.cursor {
    fill: #ff0;
  }

  text.green {
    fill: #008000;
  }

  text.red {
    fill: #f00;
  }

  text.blue {
    fill: #2a2ad2;
  }

  .bold {
    font-size: 12px;
    font-weight: 700;
  }

  /* Time scale */
  .time {
    display: flex;
    height: 18px;
    flex-shrink: 0;
  }

  .scale {
    position: relative;
    flex: 1;
    min-width: 0;
    height: 18px;
    overflow: visible;
  }

  .hour {
    text-anchor: middle;
  }

  .latest {
    width: 18px;
    border-left: 1px solid #8fa2ad;
    background: linear-gradient(#fff, #e8e8e8);
    font-size: 18px;
    line-height: 14px;
    color: #444;
  }

  .rest {
    width: 51px;
    border-left: 1px solid #8fa2ad;
  }

  .foot {
    height: 2px;
    flex-shrink: 0;
    border-top: 1px solid #8fa2ad;
    background: #cfe0ea;
  }
</style>
